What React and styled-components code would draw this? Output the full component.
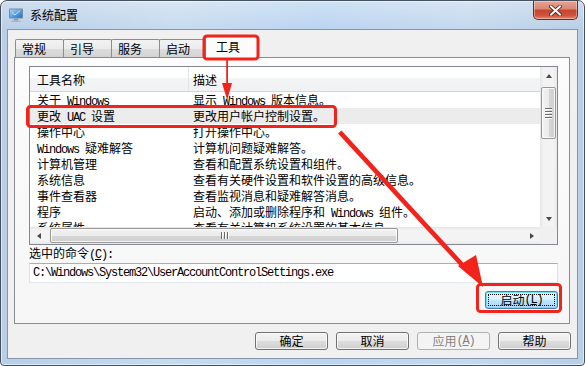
import styled, { createGlobalStyle } from "styled-components";

const GlobalStyle = createGlobalStyle`
  html, body {
    margin: 0;
    padding: 0;
  }
  body {
    width: 585px;
    height: 366px;
    overflow: hidden;
    background: #fff;
    font-family: "Noto Sans CJK SC", "Microsoft YaHei", sans-serif;
    font-size: 12px;
    color: #000;
  }
  * {
    box-sizing: border-box;
  }
`;

const Window = styled.div`
  position: relative;
  width: 585px;
  height: 366px;
  display: flex;
  flex-direction: column;
  padding: 0 6px 6px;
  border: 1px solid #45505e;
  border-radius: 7px 7px 4px 4px;
  background: linear-gradient(180deg, rgba(255, 255, 255, 0.3) 0, rgba(255, 255, 255, 0) 28px),
    linear-gradient(90deg, #b9cfe7 0%, #c7dbef 30%, #bad5f1 55%, #c5d9ee 80%, #b9cfe6 100%);
  box-shadow: inset 0 0 0 1px rgba(255, 255, 255, 0.55);
`;

const TitleBar = styled.div`
  height: 28px;
  flex: 0 0 auto;
  display: flex;
  align-items: center;
`;

const TitleIcon = styled.svg`
  width: 16px;
  height: 16px;
  margin-left: 1px;
  margin-top: -1px;
`;

const TitleText = styled.span`
  margin-left: 6px;
  font-size: 12px;
  line-height: 16px;
  color: #000;
  flex: 1 1 auto;
`;

const CloseButton = styled.div`
  align-self: flex-start;
  width: 45px;
  height: 19px;
  display: flex;
  align-items: center;
  justify-content: center;
  border: 1px solid #6b2b22;
  border-top: none;
  border-radius: 0 0 5px 5px;
  background: linear-gradient(180deg, #e8a493 0%, #d98573 45%, #c5452f 50%, #d0533b 80%, #e5866d 100%);
  box-shadow: inset 0 0 0 1px rgba(255, 255, 255, 0.35);
`;

const Client = styled.div`
  flex: 1 1 auto;
  display: flex;
  flex-direction: column;
  padding: 9px 6px 8px 6px;
  background: #f0f0f0;
  border: 1px solid #8496ac;
`;

const TabStrip = styled.div`
  display: flex;
  align-items: flex-end;
  height: 18px;
  padding-left: 1px;
  position: relative;
  z-index: 1;
`;

const Tab = styled.div`
  position: relative;
  width: ${(p) => (p.$active ? 53 : 49)}px;
  height: ${(p) => (p.$active ? 22 : 18)}px;
  margin-left: ${(p) => (p.$active ? -2 : 0)}px;
  margin-right: -1px;
  margin-bottom: ${(p) => (p.$active ? -1 : 0)}px;
  padding-left: ${(p) => (p.$active ? 10 : 6)}px;
  padding-top: ${(p) => (p.$active ? 1 : 0)}px;
  border: 1px solid #898c95;
  border-bottom: none;
  border-radius: 2px 2px 0 0;
  line-height: 17px;
  font-size: 12px;
  z-index: ${(p) => (p.$active ? 2 : 1)};
  background: ${(p) =>
    p.$active
      ? "#fcfcfc"
      : "linear-gradient(180deg, #f3f3f3 0%, #ebebeb 50%, #dddddd 51%, #d3d3d3 100%)"};
`;

const Panel = styled.div`
  height: 267px;
  margin-right: 1px;
  display: flex;
  flex-direction: column;
  padding: 8px 11px 0 14px;
  border: 1px solid #898c95;
  background: linear-gradient(180deg, #fcfcfc 0%, #f6f6f6 100%);
`;

const ListView = styled.div`
  height: 179px;
  display: grid;
  grid-template-columns: 1fr 17px;
  grid-template-rows: 1fr 17px;
  border: 1px solid #828790;
  background: #fff;
  overflow: hidden;
`;

const ListBody = styled.div`
  overflow: hidden;
  display: flex;
  flex-direction: column;
`;

const HeaderRow = styled.div`
  display: flex;
  height: 25px;
  flex: 0 0 auto;
  background: linear-gradient(180deg, #ffffff 0%, #ffffff 45%, #f3f4f6 46%, #f1f2f4 100%);
  border-bottom: 1px solid #d5d5d5;
`;

const HeaderCell = styled.div`
  width: ${(p) => p.$w};
  flex: 0 0 auto;
  padding-left: ${(p) => p.$pad}px;
  display: flex;
  align-items: center;
  font-size: 12px;
  border-right: ${(p) => (p.$divider ? "1px solid #e5e5e5" : "none")};
`;

const Row = styled.div`
  display: flex;
  height: 16px;
  flex: 0 0 auto;
  line-height: 16px;
  white-space: nowrap;
  background: ${(p) => (p.$selected ? "#ececec" : "transparent")};
`;

const Cell = styled.div`
  width: ${(p) => p.$w};
  flex: 0 0 auto;
  padding-left: ${(p) => p.$pad}px;
  overflow: visible;
`;

const Mono = styled.span`
  font-family: "Liberation Mono", "DejaVu Sans Mono", monospace;
  letter-spacing: -1.2px;
`;

const ScrollBar = styled.div`
  display: flex;
  flex-direction: ${(p) => (p.$vertical ? "column" : "row")};
  background: ${(p) =>
    p.$vertical
      ? "linear-gradient(90deg, #e6e6e6 0%, #f3f3f3 20%, #f3f3f3 80%, #e8e8e8 100%)"
      : "linear-gradient(180deg, #e6e6e6 0%, #f3f3f3 20%, #f3f3f3 80%, #e8e8e8 100%)"};
`;

const ArrowBox = styled.div`
  width: 17px;
  height: 17px;
  flex: 0 0 auto;
  display: flex;
  align-items: center;
  justify-content: center;
`;

const Track = styled.div`
  flex: 1 1 auto;
  display: flex;
  flex-direction: ${(p) => (p.$vertical ? "column" : "row")};
`;

const Thumb = styled.div`
  flex: 0 0 auto;
  display: flex;
  align-items: center;
  justify-content: center;
  flex-direction: ${(p) => (p.$vertical ? "column" : "row")};
  gap: 2px;
  border: 1px solid #979797;
  border-radius: 2px;
  ${(p) =>
    p.$vertical
      ? `width: 15px; margin-left: 1px; height: ${p.$size}px; margin-top: ${p.$offset}px;
         background: linear-gradient(90deg, #f2f2f2 0%, #ebebeb 50%, #d6d6d6 51%, #d0d0d0 100%);`
      : `height: 15px; margin-top: 1px; width: ${p.$size}px; margin-left: ${p.$offset}px;
         background: linear-gradient(180deg, #f2f2f2 0%, #ebebeb 50%, #d6d6d6 51%, #d0d0d0 100%);`}
  box-shadow: inset 0 0 0 1px rgba(255, 255, 255, 0.8);
`;

const Grip = styled.span`
  display: block;
  background: #6b6b6b;
  box-shadow: ${(p) => (p.$vertical ? "0 1px 0 #fff" : "1px 0 0 #fff")};
  ${(p) => (p.$vertical ? "width: 7px; height: 1px;" : "width: 1px; height: 7px;")}
`;

const Corner = styled.div`
  background: #f0f0f0;
`;

const FieldLabel = styled.div`
  height: 14px;
  margin-top: 1px;
  line-height: 14px;
  font-size: 12px;
`;

const TextBox = styled.div`
  height: 20px;
  margin-top: 3px;
  padding-left: 3px;
  display: flex;
  align-items: center;
  background: #fff;
  border: 1px solid;
  border-color: #abadb3 #dbdfe6 #e3e9ef #e2e3ea;
  font-size: 12px;
  white-space: nowrap;
`;

const ButtonRow = styled.div`
  display: flex;
  justify-content: flex-end;
  gap: 8px;
  margin-top: ${(p) => p.$top}px;
  padding-right: ${(p) => p.$right}px;
`;

const Button = styled.div`
  width: 73px;
  height: 18px;
  display: flex;
  align-items: center;
  justify-content: center;
  border: 1px solid ${(p) => (p.$default ? "#3c7fb1" : p.$disabled ? "#adb2b5" : "#707070")};
  border-radius: 3px;
  font-size: 12px;
  line-height: 14px;
  color: ${(p) => (p.$disabled ? "#838383" : "#000")};
  background: ${(p) =>
    p.$disabled
      ? "#f4f4f4"
      : p.$default
      ? "linear-gradient(180deg, #eaf6fd 0%, #d9f0fc 50%, #bee6fd 51%, #a7d9f5 100%)"
      : "linear-gradient(180deg, #f2f2f2 0%, #ebebeb 50%, #dddddd 51%, #cfcfcf 100%)"};
  box-shadow: ${(p) =>
    p.$default ? "inset 0 0 0 1px #6fe0ff" : p.$disabled ? "none" : "inset 0 0 0 1px rgba(255,255,255,0.75)"};
  outline: ${(p) => (p.$default ? "1px dotted #000" : "none")};
  outline-offset: -4px;
`;

const Hotkey = styled.span`
  font-family: "Liberation Mono", "DejaVu Sans Mono", monospace;
  letter-spacing: -1.2px;
  u {
    text-decoration: underline;
    text-underline-offset: 1px;
  }
`;

const Annotations = styled.svg`
  position: absolute;
  left: -1px;
  top: -1px;
  width: 585px;
  height: 366px;
  pointer-events: none;
  z-index: 10;
`;

const rows = [
  ["关于 Windows", "显示 Windows 版本信息。"],
  ["更改 UAC 设置", "更改用户帐户控制设置。"],
  ["操作中心", "打开操作中心。"],
  ["Windows 疑难解答", "计算机问题疑难解答。"],
  ["计算机管理", "查看和配置系统设置和组件。"],
  ["系统信息", "查看有关硬件设置和软件设置的高级信息。"],
  ["事件查看器", "查看监视消息和疑难解答消息。"],
  ["程序", "启动、添加或删除程序和 Windows 组件。"],
  ["系统属性", "查看有关计算机系统设置的基本信息。"],
];

const tabs = ["常规", "引导", "服务", "启动", "工具"];

function Txt({ text }) {
  const parts = text.split(/([\x20-\x7e]+)/).filter(Boolean);
  return parts.map((p, i) =>
    /^[\x20-\x7e]+$/.test(p) ? <Mono key={i}>{p}</Mono> : <span key={i}>{p}</span>
  );
}

function Arrow({ dir }) {
  const pts = {
    up: "1,5 4,1 7,5",
    down: "1,1 4,5 7,1",
    left: "5,1 1,4 5,7",
    right: "1,1 5,4 1,7",
  }[dir];
  const vertical = dir === "up" || dir === "down";
  return (
    <svg width={vertical ? 8 : 6} height={vertical ? 6 : 8} viewBox={vertical ? "0 0 8 6" : "0 0 6 8"}>
      <polygon points={pts} fill="#4a4a4a" />
    </svg>
  );
}

function Grips({ vertical }) {
  return (
    <>
      <Grip $vertical={vertical} />
      <Grip $vertical={vertical} />
      <Grip $vertical={vertical} />
      {vertical && <Grip $vertical={vertical} />}
    </>
  );
}

export default function App() {
  return (
    <>
      <GlobalStyle />
      <Window>
        <TitleBar>
          <TitleIcon viewBox="0 0 16 16">
            <rect x="1" y="1.5" width="14" height="10" rx="1" fill="#7d8a99" />
            <rect x="2" y="2.5" width="12" height="8" fill="url(#scr)" />
            <defs>
              <linearGradient id="scr" x1="0" y1="0" x2="1" y2="1">
                <stop offset="0" stopColor="#9fd4ff" />
                <stop offset="1" stopColor="#1f6fc4" />
              </linearGradient>
            </defs>
            <path d="M4 5.5 L7 8 L12 3.5" stroke="#fff" strokeWidth="1" fill="none" opacity="0.7" />
            <rect x="6" y="11.5" width="4" height="2" fill="#8c96a3" />
            <rect x="3.5" y="13.5" width="9" height="1.5" rx="0.5" fill="#a9b2bd" />
          </TitleIcon>
          <TitleText>系统配置</TitleText>
          <CloseButton>
            <svg width="13" height="11" viewBox="0 0 13 11">
              <path
                d="M2 1.5 L11 9.5 M11 1.5 L2 9.5"
                stroke="#4a1d17"
                strokeWidth="3.6"
                strokeLinecap="square"
              />
              <path
                d="M2 1.5 L11 9.5 M11 1.5 L2 9.5"
                stroke="#fff"
                strokeWidth="2"
                strokeLinecap="square"
              />
            </svg>
          </CloseButton>
        </TitleBar>

        <Client>
          <TabStrip>
            {tabs.map((t) => (
              <Tab key={t} $active={t === "工具"}>
                {t}
              </Tab>
            ))}
          </TabStrip>

          <Panel>
            <ListView>
              <ListBody>
                <HeaderRow>
                  <HeaderCell $w="159px" $pad={7} $divider>
                    工具名称
                  </HeaderCell>
                  <HeaderCell $w="300px" $pad={4}>
                    描述
                  </HeaderCell>
                </HeaderRow>
                {rows.map(([name, desc], i) => (
                  <Row key={name} $selected={i === 1}>
                    <Cell $w="159px" $pad={7}>
                      <Txt text={name} />
                    </Cell>
                    <Cell $w="360px" $pad={4}>
                      <Txt text={desc} />
                    </Cell>
                  </Row>
                ))}
              </ListBody>

              <ScrollBar $vertical>
                <ArrowBox>
                  <Arrow dir="up" />
                </ArrowBox>
                <Track $vertical>
                  <Thumb $vertical $size={52} $offset={3}>
                    <Grips vertical />
                  </Thumb>
                </Track>
                <ArrowBox>
                  <Arrow dir="down" />
                </ArrowBox>
              </ScrollBar>

              <ScrollBar>
                <ArrowBox>
                  <Arrow dir="left" />
                </ArrowBox>
                <Track>
                  <Thumb $size={348} $offset={3}>
                    <Grips />
                  </Thumb>
                </Track>
                <ArrowBox>
                  <Arrow dir="right" />
                </ArrowBox>
              </ScrollBar>
              <Corner />
            </ListView>

            <FieldLabel>
              选中的命令<Hotkey>
                (<u>C</u>):
              </Hotkey>
            </FieldLabel>
            <TextBox>
              <Mono>C:\Windows\System32\UserAccountControlSettings.exe</Mono>
            </TextBox>

            <ButtonRow $top={8} $right={0}>
              <Button $default>
                启动<Hotkey>
                  (<u>L</u>)
                </Hotkey>
              </Button>
            </ButtonRow>
          </Panel>

          <ButtonRow $top={8} $right={0}>
            <Button>确定</Button>
            <Button>取消</Button>
            <Button $disabled>
              应用<Hotkey>
                (<u>A</u>)
              </Hotkey>
            </Button>
            <Button>帮助</Button>
          </ButtonRow>
        </Client>

        <Annotations viewBox="0 0 585 366">
          <g fill="none" stroke="#f2231b" strokeWidth="3" strokeLinejoin="round">
            <rect x="204" y="36" width="54" height="23" rx="3" />
            <rect x="27.5" y="106.5" width="308" height="20" rx="3" />
            <rect x="477.5" y="284.5" width="83" height="27" rx="3" />
          </g>
          <g fill="#f2231b">
            <rect x="226.2" y="60" width="1.8" height="26" />
            <polygon points="222,83 232,83 227.2,100" />
            <polygon points="338,133.5 341.5,130.5 470,270 466.5,273" />
            <polygon points="458,266 476,255 483,287" />
          </g>
        </Annotations>
      </Window>
    </>
  );
}
